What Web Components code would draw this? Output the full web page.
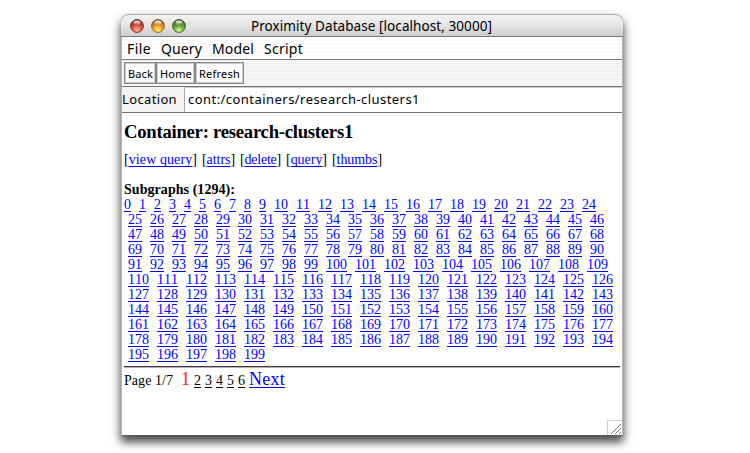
<!DOCTYPE html>
<html lang="en"><head><meta charset="utf-8"><title>Proximity Database</title>
<style>
body{margin:0;background:#fff;width:750px;height:453px;overflow:hidden;display:flex;justify-content:center;box-sizing:border-box;padding:14px 6px 0 0}
</style></head><body>
<app-window></app-window>
<script>
class Base extends HTMLElement{
  constructor(){super();this.attachShadow({mode:'open'}).innerHTML=this.html();}
  html(){return '';}
}
// Text tracked to a given advance width.
class TrackedText extends Base{
  html(){return `<style>:host{display:inline-block;white-space:pre}span{display:inline-block}</style><span><slot></slot></span>`}
  connectedCallback(){
    const s=this.shadowRoot.querySelector('span'),w=+this.getAttribute('width');
    const n=s.getBoundingClientRect().width,c=this.textContent.length;
    s.style.letterSpacing=((w-n)/c)+'px';
    this.style.width=w+'px';
  }
}
class WindowLight extends HTMLElement{
  connectedCallback(){
    if(this.shadowRoot)return;
    const c=this.getAttribute('tone').split(',');
    this.attachShadow({mode:'open'}).innerHTML=`<style>:host{display:block;width:14px;height:14px}svg{display:block}</style>
  <svg width="14" height="14" viewBox="0 0 14 14"><defs><radialGradient id="g" cx=".5" cy=".85" r=".75"><stop offset="0" stop-color="${c[2]}"/><stop offset=".5" stop-color="${c[1]}"/><stop offset="1" stop-color="${c[0]}"/></radialGradient>
  <linearGradient id="h" x2="0" y2="1"><stop offset="0" stop-color="#fff" stop-opacity=".95"/><stop offset="1" stop-color="#fff" stop-opacity=".15"/></linearGradient></defs>
  <circle cx="7" cy="7" r="6.4" fill="url(#g)" stroke="${c[0]}" stroke-width="1"/><path d="M1.4 4.2A6.4 6.4 0 0 1 12.6 4.2" fill="none" stroke="#333" stroke-opacity=".55"/><ellipse cx="7" cy="3.6" rx="3.6" ry="2.1" fill="url(#h)"/></svg>`}
}
class TitleBar extends Base{
  html(){return `<style>:host{display:flex;align-items:center;height:23px;box-sizing:border-box;padding:0 0 0 9px;background:linear-gradient(#f3f3f3,#e6e6e6 45%,#cecece);border-top:1px solid #aaa;border-bottom:1px solid #777;border-radius:8px 8px 0 0;font:13.5px "Noto Sans",sans-serif;line-height:20px}
  .l{display:flex;gap:7px;width:121px}</style>
  <div class="l"><window-light tone="#8b2b20,#dc5a4c,#ffb9a8"></window-light><window-light tone="#a65f16,#f2a02c,#fff47a"></window-light><window-light tone="#3c6a22,#72a83e,#d8ff9c"></window-light></div><slot></slot>`}
}
class MenuBar extends Base{
  html(){return `<style>:host{display:flex;height:23px;box-sizing:border-box;border-bottom:1px solid #777;padding-left:5px;background:repeating-linear-gradient(#fff 0 2px,#fafafa 2px 4px);font:14px "Noto Sans",sans-serif;line-height:23px}
  div{display:flex;gap:10px}</style><div><slot></slot></div>`}
}
class ToolButton extends Base{
  html(){return `<style>:host{display:block;height:22px;box-sizing:border-box;border:1px solid #858b85;box-shadow:inset -1px -1px #ccc,inset 1px 1px #ccc;background:#fafafa;padding-left:3px;font:11px "Noto Sans",sans-serif;line-height:22px}</style><slot></slot>`}
}
class ToolBar extends Base{
  html(){return `<style>:host{display:flex;height:27px;box-sizing:border-box;border-bottom:1px solid #727872;padding:2px 0 0 2px;background:repeating-linear-gradient(#f6f6f6 0 2px,#f1f1f1 2px 4px)}</style><slot></slot>`}
}
class LocationBar extends Base{
  html(){return `<style>:host{display:flex;height:26px;box-sizing:border-box;border-bottom:1px solid #727872;background:#f4f4f4;font:13px "Noto Sans",sans-serif;line-height:24px}
  .k{width:62px}.f{flex:1;background:#fff;border-left:1px solid #aaa;border-top:1px solid #ccc;padding-left:3px;line-height:22px}</style><div class="k"><slot name="label"></slot></div><div class="f"><slot></slot></div>`}
}
class LinkItem extends Base{
  html(){return `<style>:host{color:#00f}a{color:inherit;text-decoration:underline;text-decoration-thickness:1px;text-underline-offset:2px;text-decoration-skip-ink:none}</style><a href="#"><slot></slot></a>`}
}
class SubgraphList extends Base{
  html(){
    const starts=[0,25,47,69,91,110,127,144,161,178,195,200];
    let r='';
    for(let i=0;i<11;i++){let a=[];for(let n=starts[i];n<starts[i+1];n++)a.push(`<link-item>${n}</link-item>`);r+=`<div>${a.join('  ')}</div>`}
    return `<style>:host{display:block;white-space:pre;word-spacing:.5px;font-kerning:none}div{height:15px;line-height:15px;padding-left:4px}div:first-of-type{padding-left:0}</style>${r}`}
}
class ContainerPage extends Base{
  html(){return `<style>:host{display:block;flex:1;padding:0 2px;background:#fff;font:14px "Liberation Serif",serif;color:#000}
  h1{font-size:18.7px;line-height:22px;margin:8px 0 0;height:22px}.a{display:flex;gap:5px;margin-top:8px;height:18px;line-height:18px}.s{margin-top:13px;height:15px;line-height:15px;font-weight:bold}
  hr{border:0;border-top:1px solid #413543;border-bottom:1px solid #b5b0b5;margin:4px 0 0}
  .p{display:flex;align-items:baseline;height:24px;line-height:22px}.p b{font-weight:normal;color:#f22;font-size:18px;width:13px;margin-left:8px}.n{display:flex;gap:4px;width:55px}.n link-item{color:#000}.x{font-size:18px}</style>
  <h1><tracked-text width="229">Container: research-clusters1</tracked-text></h1>
  <div class="a"><tracked-text width="73">[<link-item>view query</link-item>]</tracked-text><tracked-text width="33">[<link-item>attrs</link-item>]</tracked-text><tracked-text width="41">[<link-item>delete</link-item>]</tracked-text><tracked-text width="41">[<link-item>query</link-item>]</tracked-text><tracked-text width="50">[<link-item>thumbs</link-item>]</tracked-text></div>
  <div class="s"><tracked-text width="111">Subgraphs (1294):</tracked-text></div>
  <subgraph-list></subgraph-list><hr>
  <div class="p"><tracked-text width="49">Page 1/7</tracked-text><b>1</b><span class="n"><link-item>2</link-item><link-item>3</link-item><link-item>4</link-item><link-item>5</link-item><link-item>6</link-item></span><tracked-text class="x" width="36"><link-item>Next</link-item></tracked-text></div>`}
}
class GrowBox extends Base{
  html(){return `<style>:host{position:absolute;right:0;bottom:0;width:15px;height:15px;background:#fff}svg{display:block}</style><svg width="15" height="15"><path d="M.5 15V.5H15" fill="none" stroke="#ccc"/><path d="M4 14L14 4M8 14L14 8M12 14L14 12" stroke="#777"/></svg>`}
}
class AppWindow extends Base{
  html(){return `<style>:host{display:flex;flex-direction:column;position:relative;box-sizing:border-box;width:502px;height:422px;border:solid #b4b4b4;border-width:0 1px 1px;border-bottom-color:#4b5c60;border-radius:8px 8px 0 0;background:#fff;box-shadow:0 6px 9px rgba(0,0,0,.6),0 5px 12px rgba(0,0,0,.28)}title-bar{margin:0 -1px}</style>
  <title-bar><tracked-text width="241">Proximity Database [localhost, 30000]</tracked-text></title-bar>
  <menu-bar><tracked-text width="24">File</tracked-text><tracked-text width="41">Query</tracked-text><tracked-text width="42">Model</tracked-text><tracked-text width="39">Script</tracked-text></menu-bar>
  <tool-bar><tool-button style="width:32px"><tracked-text width="25">Back</tracked-text></tool-button><tool-button style="width:39px"><tracked-text width="32">Home</tracked-text></tool-button><tool-button style="width:49px"><tracked-text width="41">Refresh</tracked-text></tool-button></tool-bar>
  <location-bar><tracked-text slot="label" width="55">Location</tracked-text><tracked-text width="232">cont:/containers/research-clusters1</tracked-text></location-bar>
  <container-page></container-page><grow-box></grow-box>`}
}
customElements.define('tracked-text',TrackedText);
customElements.define('window-light',WindowLight);
customElements.define('title-bar',TitleBar);
customElements.define('menu-bar',MenuBar);
customElements.define('tool-button',ToolButton);
customElements.define('tool-bar',ToolBar);
customElements.define('location-bar',LocationBar);
customElements.define('link-item',LinkItem);
customElements.define('subgraph-list',SubgraphList);
customElements.define('container-page',ContainerPage);
customElements.define('grow-box',GrowBox);
customElements.define('app-window',AppWindow);
</script></body></html>
